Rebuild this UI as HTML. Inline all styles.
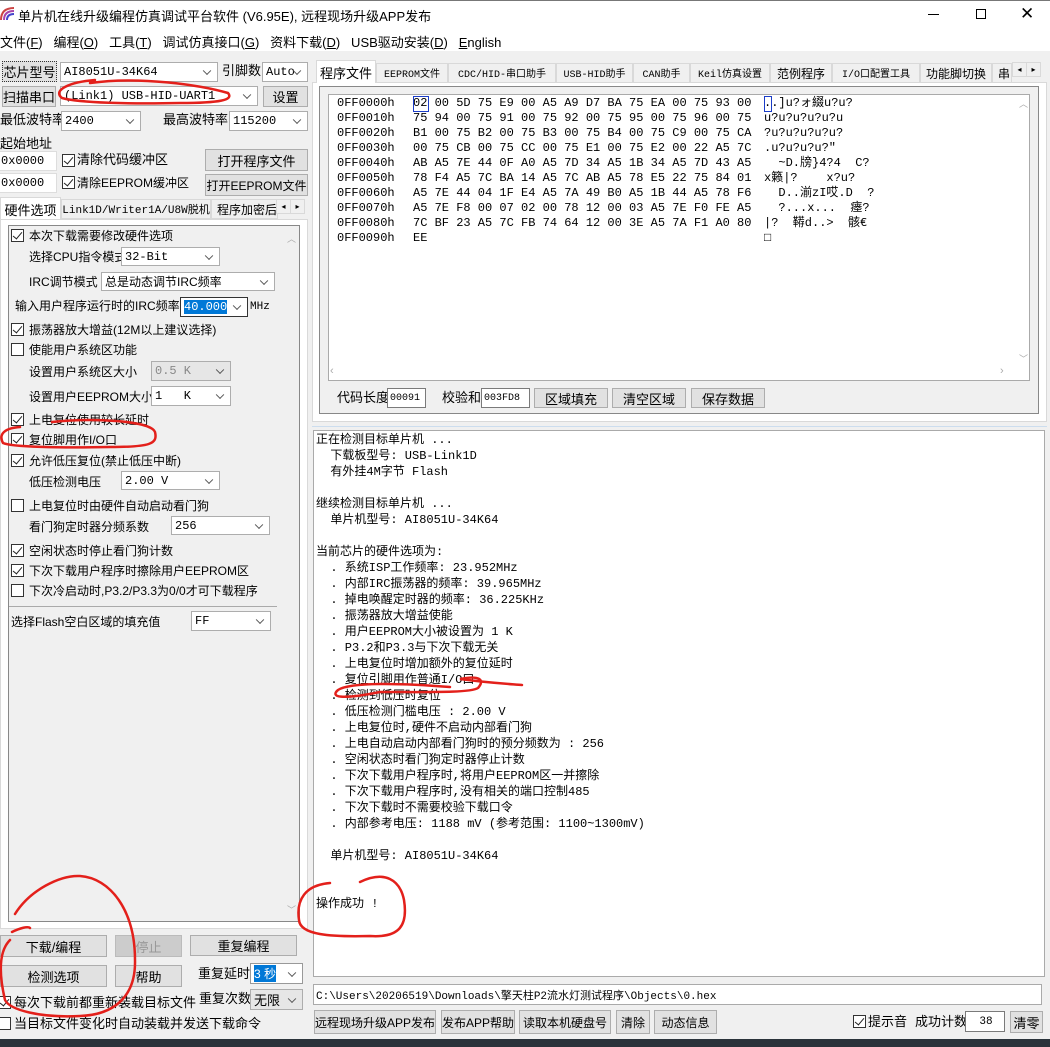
<!DOCTYPE html>
<html><head><meta charset="utf-8"><style>
*{box-sizing:border-box;margin:0;padding:0}
body{width:1050px;height:1047px;overflow:hidden;background:#f0f0f0;font-family:"Liberation Sans","Noto Sans CJK SC",sans-serif;font-size:12px;color:#000;position:relative}
.a{position:absolute;white-space:nowrap}
.m{font-family:"Liberation Mono","Noto Sans CJK SC",monospace}
.btn{position:absolute;background:#e1e1e1;border:1px solid #adadad;text-align:center;font-size:12px;display:flex;align-items:center;justify-content:center;white-space:nowrap;overflow:hidden}
.sel{position:absolute;background:#fff;border:1px solid #adadad;padding-left:3px;display:flex;align-items:center;font-size:12px;white-space:nowrap}
.sel:after{content:"";position:absolute;right:7px;top:50%;width:5px;height:5px;border-right:1px solid #555;border-bottom:1px solid #555;transform:translateY(-70%) rotate(45deg)}
.sel.g{background:#e6e6e6;color:#888}
.inp{position:absolute;background:#fff;border:1px solid #7a7a7a;padding-left:2px;display:flex;align-items:center;white-space:nowrap;overflow:hidden}
.cb{position:absolute;width:13px;height:13px;border:1px solid #333;background:#fff}
.cb.c:after{content:"";position:absolute;left:3px;top:0px;width:4px;height:8px;border-right:1.5px solid #222;border-bottom:1.5px solid #222;transform:rotate(40deg)}
.t{position:absolute;white-space:nowrap;font-size:12px;line-height:16px}
.tab{position:absolute;border:1px solid #d9d9d9;background:#f0f0f0;font-size:12px;display:flex;align-items:center;justify-content:center;white-space:nowrap;overflow:hidden}
</style></head><body>
<div class="a" style="left:0;top:0;width:1050px;height:51px;background:#fff;border-top:1px solid #777"></div>
<svg class="a" style="left:0;top:6px" width="16" height="16"><path d="M1 14 Q1 2 14 2" stroke="#c44" stroke-width="2" fill="none"/><path d="M4 14 Q4 5 14 5" stroke="#a4a" stroke-width="2" fill="none"/><path d="M7 14 Q7 8 14 8" stroke="#44c" stroke-width="2" fill="none"/></svg>
<div class="a" style="left:18px;top:6px;font-size:13px">单片机在线升级编程仿真调试平台软件 (V6.95E), 远程现场升级APP发布</div>
<div class="a" style="left:928px;top:14px;width:11px;height:1px;background:#000"></div>
<div class="a" style="left:976px;top:9px;width:10px;height:10px;border:1px solid #000"></div>
<div class="a" style="left:1020px;top:4px;font-size:17px">✕</div>
<div class="a" style="left:0;top:32px;font-size:13px">文件(<u>F</u>)&nbsp;&nbsp;&nbsp;编程(<u>O</u>)&nbsp;&nbsp;&nbsp;工具(<u>T</u>)&nbsp;&nbsp;&nbsp;调试仿真接口(<u>G</u>)&nbsp;&nbsp;&nbsp;资料下载(<u>D</u>)&nbsp;&nbsp;&nbsp;USB驱动安装(<u>D</u>)&nbsp;&nbsp;&nbsp;<u>E</u>nglish</div>

<div class="btn" style="left:2px;top:61px;width:55px;height:21px;border:1px dotted #333;font-size:13px">芯片型号</div>
<div class="sel m" style="left:60px;top:62px;width:158px;height:20px">AI8051U-34K64</div>
<div class="t" style="left:222px;top:63px;font-size:13px">引脚数</div>
<div class="sel m" style="left:262px;top:62px;width:46px;height:20px">Auto</div>
<div class="btn" style="left:2px;top:86px;width:54px;height:21px;font-size:13px">扫描串口</div>
<div class="sel m" style="left:60px;top:86px;width:198px;height:20px">(Link1) USB-HID-UART1</div>
<div class="btn" style="left:263px;top:86px;width:45px;height:21px;font-size:13px">设置</div>
<div class="t" style="left:0;top:112px;font-size:13px">最低波特率</div>
<div class="sel m" style="left:61px;top:111px;width:80px;height:20px">2400</div>
<div class="t" style="left:163px;top:112px;font-size:13px">最高波特率</div>
<div class="sel m" style="left:229px;top:111px;width:79px;height:20px">115200</div>
<div class="t" style="left:0;top:136px;font-size:13px">起始地址</div>
<div class="inp m" style="left:-2px;top:151px;width:59px;height:20px;border-color:#ddd">0x0000</div>
<div class="cb c" style="left:62px;top:154px"></div><div class="t" style="left:77px;top:152px;font-size:13px">清除代码缓冲区</div>
<div class="btn" style="left:205px;top:149px;width:103px;height:22px;font-size:13px">打开程序文件</div>
<div class="inp m" style="left:-2px;top:173px;width:59px;height:20px;border-color:#ddd">0x0000</div>
<div class="cb c" style="left:62px;top:176px"></div><div class="t" style="left:77px;top:175px">清除EEPROM缓冲区</div>
<div class="btn" style="left:205px;top:174px;width:103px;height:22px">打开EEPROM文件</div>
<div class="tab" style="left:0;top:197px;width:61px;height:23px;background:#fff;border-bottom:none;font-size:13px">硬件选项</div>
<div class="tab m" style="left:61px;top:199px;width:150px;height:20px;font-size:11px">Link1D/Writer1A/U8W脱机</div>
<div class="tab" style="left:211px;top:199px;width:67px;height:20px;justify-content:flex-start;padding-left:5px">程序加密后</div>
<div class="tab" style="left:276px;top:199px;width:15px;height:15px;font-size:8px">◂</div>
<div class="tab" style="left:290px;top:199px;width:15px;height:15px;font-size:8px">▸</div>
<div class="a" style="left:0;top:219px;width:308px;height:710px;background:#fff;border:1px solid #d9d9d9"></div>
<div class="a" style="left:8px;top:225px;width:292px;height:697px;background:#f0f0f0;border:1px solid #888"></div>
<div class="a" style="left:283px;top:226px;width:16px;height:695px;background:#f0f0f0"></div>
<div class="a" style="left:287px;top:232px;font-size:9px;color:#aaa">︿</div>
<div class="a" style="left:287px;top:903px;font-size:9px;color:#aaa">﹀</div>

<div class="cb c" style="left:11px;top:229px"></div><div class="t" style="left:29px;top:228px">本次下载需要修改硬件选项</div>
<div class="t" style="left:29px;top:249px">选择CPU指令模式</div><div class="sel m" style="left:121px;top:247px;width:99px;height:19px">32-Bit</div>
<div class="t" style="left:29px;top:274px">IRC调节模式</div><div class="sel" style="left:101px;top:272px;width:174px;height:19px">总是动态调节IRC频率</div>
<div class="t" style="left:15px;top:298px">输入用户程序运行时的IRC频率</div>
<div class="sel m" style="left:180px;top:297px;width:68px;height:20px;border-color:#333"><span style="background:#0078d7;color:#fff">40.000</span></div>
<div class="t m" style="left:250px;top:299px;font-size:11px">MHz</div>
<div class="cb c" style="left:11px;top:323px"></div><div class="t" style="left:29px;top:322px">振荡器放大增益(12M以上建议选择)</div>
<div class="cb" style="left:11px;top:343px"></div><div class="t" style="left:29px;top:342px">使能用户系统区功能</div>
<div class="t" style="left:29px;top:364px">设置用户系统区大小</div><div class="sel g m" style="left:151px;top:361px;width:80px;height:20px">0.5 K</div>
<div class="t" style="left:29px;top:389px">设置用户EEPROM大小</div><div class="sel m" style="left:151px;top:386px;width:80px;height:20px">1&nbsp;&nbsp;&nbsp;K</div>
<div class="cb c" style="left:11px;top:413px"></div><div class="t" style="left:29px;top:412px">上电复位使用较长延时</div>
<div class="cb c" style="left:11px;top:433px"></div><div class="t" style="left:29px;top:432px">复位脚用作I/O口</div>
<div class="cb c" style="left:11px;top:454px"></div><div class="t" style="left:29px;top:453px">允许低压复位(禁止低压中断)</div>
<div class="t" style="left:29px;top:474px">低压检测电压</div><div class="sel m" style="left:121px;top:471px;width:99px;height:19px">2.00 V</div>
<div class="cb" style="left:11px;top:499px"></div><div class="t" style="left:29px;top:498px">上电复位时由硬件自动启动看门狗</div>
<div class="t" style="left:29px;top:519px">看门狗定时器分频系数</div><div class="sel m" style="left:171px;top:516px;width:99px;height:19px">256</div>
<div class="cb c" style="left:11px;top:544px"></div><div class="t" style="left:29px;top:543px">空闲状态时停止看门狗计数</div>
<div class="cb c" style="left:11px;top:564px"></div><div class="t" style="left:29px;top:563px">下次下载用户程序时擦除用户EEPROM区</div>
<div class="cb" style="left:11px;top:584px"></div><div class="t" style="left:29px;top:583px">下次冷启动时,P3.2/P3.3为0/0才可下载程序</div>
<div class="a" style="left:9px;top:606px;width:268px;height:1px;background:#aaa"></div>
<div class="t" style="left:11px;top:614px">选择Flash空白区域的填充值</div><div class="sel m" style="left:191px;top:611px;width:80px;height:20px">FF</div>

<div class="btn" style="left:0;top:935px;width:107px;height:22px;font-size:13px">下载/编程</div>
<div class="btn" style="left:115px;top:935px;width:67px;height:22px;background:#ccc;color:#999;border-color:#bbb;font-size:13px">停止</div>
<div class="btn" style="left:190px;top:935px;width:107px;height:21px;font-size:13px">重复编程</div>
<div class="btn" style="left:0;top:965px;width:107px;height:22px;font-size:13px">检测选项</div>
<div class="btn" style="left:115px;top:965px;width:67px;height:22px;font-size:13px">帮助</div>
<div class="t" style="left:198px;top:966px;font-size:13px">重复延时</div>
<div class="sel" style="left:250px;top:963px;width:53px;height:21px;border-color:#999"><span style="background:#0078d7;color:#fff">3 秒</span></div>
<div class="cb c" style="left:-2px;top:996px"></div><div class="t" style="left:14px;top:995px;font-size:13px">每次下载前都重新装载目标文件</div>
<div class="t" style="left:199px;top:991px;font-size:13px">重复次数</div>
<div class="sel g" style="left:250px;top:989px;width:53px;height:21px;color:#000;font-size:13px">无限</div>
<div class="cb" style="left:-2px;top:1017px"></div><div class="t" style="left:14px;top:1016px;font-size:13px">当目标文件变化时自动装载并发送下载命令</div>

<div class="a" style="left:312px;top:82px;width:735px;height:340px;background:#fff;border:1px solid #d9d9d9"></div>
<div class="tab" style="left:316px;top:60px;width:60px;height:23px;background:#fff;border-bottom:none;font-size:13px">程序文件</div>
<div class="tab m" style="left:376px;top:63px;width:72px;height:20px;font-size:10px">EEPROM文件</div>
<div class="tab m" style="left:448px;top:63px;width:108px;height:20px;font-size:10px">CDC/HID-串口助手</div>
<div class="tab m" style="left:556px;top:63px;width:77px;height:20px;font-size:10px">USB-HID助手</div>
<div class="tab m" style="left:633px;top:63px;width:57px;height:20px;font-size:10px">CAN助手</div>
<div class="tab m" style="left:690px;top:63px;width:80px;height:20px;font-size:10px">Keil仿真设置</div>
<div class="tab" style="left:770px;top:63px;width:62px;height:20px">范例程序</div>
<div class="tab m" style="left:832px;top:63px;width:88px;height:20px;font-size:10px">I/O口配置工具</div>
<div class="tab" style="left:920px;top:63px;width:72px;height:20px">功能脚切换</div>
<div class="tab" style="left:992px;top:63px;width:20px;height:20px;justify-content:flex-start;padding-left:5px">串</div>
<div class="tab" style="left:1012px;top:62px;width:15px;height:15px;font-size:8px">◂</div>
<div class="tab" style="left:1026px;top:62px;width:15px;height:15px;font-size:8px">▸</div>
<div class="a" style="left:319px;top:86px;width:720px;height:328px;background:#f0f0f0;border:1px solid #888"></div>
<div class="a" style="left:328px;top:94px;width:702px;height:287px;background:#fff;border:1px solid #aaa"></div>
<div class="a m" style="left:337px;top:96px;font-size:12px;line-height:15px;white-space:pre">0FF0000h
0FF0010h
0FF0020h
0FF0030h
0FF0040h
0FF0050h
0FF0060h
0FF0070h
0FF0080h
0FF0090h</div>
<div class="a m" style="left:413px;top:96px;font-size:12px;line-height:15px;white-space:pre">02 00 5D 75 E9 00 A5 A9 D7 BA 75 EA 00 75 93 00
75 94 00 75 91 00 75 92 00 75 95 00 75 96 00 75
B1 00 75 B2 00 75 B3 00 75 B4 00 75 C9 00 75 CA
00 75 CB 00 75 CC 00 75 E1 00 75 E2 00 22 A5 7C
AB A5 7E 44 0F A0 A5 7D 34 A5 1B 34 A5 7D 43 A5
78 F4 A5 7C BA 14 A5 7C AB A5 78 E5 22 75 84 01
A5 7E 44 04 1F E4 A5 7A 49 B0 A5 1B 44 A5 78 F6
A5 7E F8 00 07 02 00 78 12 00 03 A5 7E F0 FE A5
7C BF 23 A5 7C FB 74 64 12 00 3E A5 7A F1 A0 80
EE</div>
<div class="a" style="left:413px;top:96px;width:16px;height:16px;border:1px solid #1a3cc8"></div>
<div class="a m" style="left:764px;top:96px;font-size:12px;line-height:15px;white-space:pre">..]u?ォ綴u?u?
u?u?u?u?u?u
?u?u?u?u?u?
.u?u?u?u?"
  ~D.牓}4?4  C?
x籁|?    x?u?
  D..湔zI哎.D  ?
  ?...x...  瘗?
|?  鞯d..>  骸€
□</div>
<div class="a" style="left:764px;top:96px;width:8px;height:16px;border:1px solid #1a3cc8"></div>
<div class="a" style="left:1019px;top:97px;font-size:9px;color:#aaa">︿</div>
<div class="a" style="left:1019px;top:352px;font-size:9px;color:#aaa">﹀</div>
<div class="a" style="left:330px;top:365px;font-size:11px;color:#aaa">‹</div>
<div class="a" style="left:1000px;top:365px;font-size:11px;color:#aaa">›</div>
<div class="t" style="left:337px;top:390px;font-size:13px">代码长度</div><div class="inp m" style="left:387px;top:388px;width:39px;height:20px;font-size:10px">00091</div>
<div class="t" style="left:442px;top:390px;font-size:13px">校验和</div><div class="inp m" style="left:481px;top:388px;width:49px;height:20px;font-size:10px">003FD8</div>
<div class="btn" style="left:534px;top:388px;width:74px;height:20px;font-size:13px">区域填充</div>
<div class="btn" style="left:612px;top:388px;width:74px;height:20px;font-size:13px">清空区域</div>
<div class="btn" style="left:691px;top:388px;width:74px;height:20px;font-size:13px">保存数据</div>
<div class="a" style="left:312px;top:426px;width:735px;height:1px;background:#cde"></div>

<div class="a" style="left:313px;top:430px;width:732px;height:547px;background:#fff;border:1px solid #aaa"></div>
<div class="a m" style="left:316px;top:432px;font-size:12px;line-height:16px;white-space:pre">正在检测目标单片机 ...
  下载板型号: USB-Link1D
  有外挂4M字节 Flash

继续检测目标单片机 ...
  单片机型号: AI8051U-34K64

当前芯片的硬件选项为:
  . 系统ISP工作频率: 23.952MHz
  . 内部IRC振荡器的频率: 39.965MHz
  . 掉电唤醒定时器的频率: 36.225KHz
  . 振荡器放大增益使能
  . 用户EEPROM大小被设置为 1 K
  . P3.2和P3.3与下次下载无关
  . 上电复位时增加额外的复位延时
  . 复位引脚用作普通I/O口
  . 检测到低压时复位
  . 低压检测门槛电压 : 2.00 V
  . 上电复位时,硬件不启动内部看门狗
  . 上电自动启动内部看门狗时的预分频数为 : 256
  . 空闲状态时看门狗定时器停止计数
  . 下次下载用户程序时,将用户EEPROM区一并擦除
  . 下次下载用户程序时,没有相关的端口控制485
  . 下次下载时不需要校验下载口令
  . 内部参考电压: 1188 mV (参考范围: 1100~1300mV)

  单片机型号: AI8051U-34K64


操作成功 !</div>

<div class="inp m" style="left:313px;top:984px;width:729px;height:21px;border-color:#aaa;font-size:11px">C:\Users\20206519\Downloads\擎天柱P2流水灯测试程序\Objects\0.hex</div>
<div class="btn" style="left:314px;top:1010px;width:122px;height:24px">远程现场升级APP发布</div>
<div class="btn" style="left:441px;top:1010px;width:74px;height:24px">发布APP帮助</div>
<div class="btn" style="left:519px;top:1010px;width:92px;height:24px">读取本机硬盘号</div>
<div class="btn" style="left:616px;top:1010px;width:34px;height:24px">清除</div>
<div class="btn" style="left:654px;top:1010px;width:63px;height:24px">动态信息</div>
<div class="cb c" style="left:853px;top:1015px"></div><div class="t" style="left:868px;top:1014px;font-size:13px">提示音</div>
<div class="t" style="left:915px;top:1014px;font-size:13px">成功计数</div>
<div class="inp m" style="left:965px;top:1011px;width:40px;height:21px;justify-content:center;font-size:11px">38</div>
<div class="btn" style="left:1010px;top:1011px;width:33px;height:22px;font-size:13px">清零</div>
<div class="a" style="left:0;top:1039px;width:1050px;height:8px;background:#2a333b"></div>

<svg class="a" style="left:0;top:0" width="1050" height="1047" fill="none" stroke="#e3201b" stroke-width="2.5" stroke-linecap="round">
<path d="M90 83 C140 76 200 85 228 93 C234 100 220 103 180 103 C130 104 80 103 62 98 C52 90 70 82 95 80"/>
<path d="M52 422 C90 418 150 420 155 432 C158 444 150 447 110 447 C60 448 12 447 3 443 C-2 434 5 428 20 427"/>
<path d="M450 687 C400 683 350 682 338 690 C330 697 340 700 380 692 C430 692 470 693 478 688 C485 680 480 675 460 679 C490 683 510 684 522 685"/>
<path d="M15 914 C30 890 60 875 80 876 C110 878 135 910 135 960 C136 1000 110 1015 80 1016 C40 1018 10 1010 5 1000 C-2 970 0 950 10 940 M12 932 C20 928 28 926 30 928"/>
<path d="M360 882 C385 870 400 880 404 900 C408 925 400 938 370 936 C330 937 300 935 299 920 C296 900 305 885 330 883"/>
</svg>
</body></html>
